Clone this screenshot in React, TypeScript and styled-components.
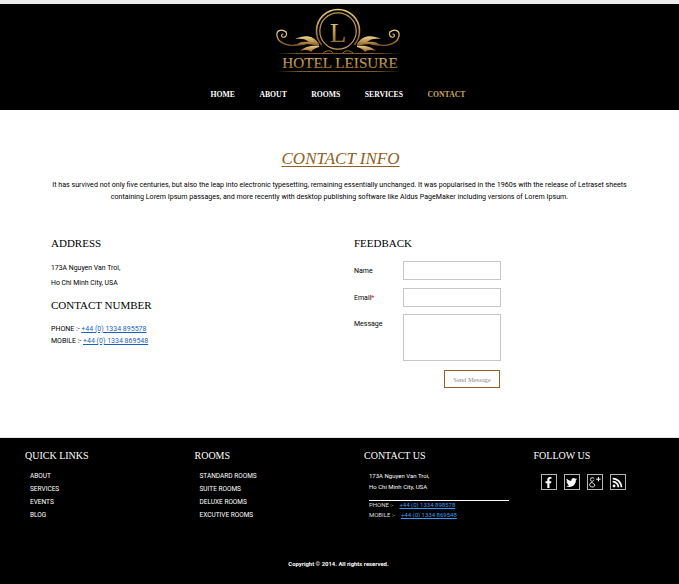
import React from "react";
import styled, { createGlobalStyle } from "styled-components";
import { FaFacebookF, FaTwitter, FaRss } from "react-icons/fa";

const GlobalStyle = createGlobalStyle`
  html, body {
    margin: 0;
    padding: 0;
    background: #fff;
  }
  body {
    font-family: Roboto, "Liberation Sans", sans-serif;
  }
  * {
    box-sizing: border-box;
  }
`;

const serif = `"Liberation Serif", "DejaVu Serif", serif`;
const gold = "#8f5f24";

const Page = styled.div`
  width: 679px;
  height: 584px;
  overflow: hidden;
  background: #fff;
`;

const Header = styled.header`
  height: 110px;
  background: #000;
  border-top: 4px solid #ececec;
  display: flex;
  flex-direction: column;
  align-items: center;
  padding-top: 4px;
`;

const LogoSvg = styled.svg`
  display: block;
  margin-right: 3px;
`;

const Nav = styled.nav`
  display: flex;
  gap: 24.5px;
  margin-top: 12px;
  padding-right: 3px;
`;

const NavLink = styled.a<{ $active?: boolean }>`
  font-family: ${serif};
  font-size: 7.7px;
  line-height: 14px;
  font-weight: 700;
  color: ${({ $active }) => ($active ? "#c9a968" : "#fff")};
`;

const Main = styled.main`
  height: 327px;
  padding-top: 38px;
`;

const Title = styled.h1`
  margin: 0;
  text-align: center;
  font-family: ${serif};
  font-size: 17px;
  line-height: 22px;
  font-weight: 400;
  font-style: italic;
  color: ${gold};
  text-decoration: underline;
  text-underline-offset: 2px;
  text-decoration-thickness: 1px;
  padding-left: 2px;
`;

const Intro = styled.p`
  margin: 9px 0 0;
  padding: 0 40px;
  text-align: center;
  font-size: 7.12px;
  line-height: 12px;
  color: #000;
`;

const Columns = styled.div`
  display: grid;
  grid-template-columns: 303px 160px;
  padding-left: 51px;
  margin-top: 32px;
`;

const SectionHead = styled.h3`
  margin: 0;
  font-family: ${serif};
  font-size: 11px;
  line-height: 16px;
  font-weight: 400;
  color: #000;
`;

const AddressLine = styled.p`
  margin: 0;
  font-size: 6.9px;
  line-height: 15px;
  color: #000;
`;

const AddressBlock = styled.div`
  margin: 10px 0 6px;
`;

const PhoneBlock = styled.div`
  margin-top: 10px;
`;

const PhoneLine = styled.p`
  margin: 0;
  font-size: 7px;
  line-height: 12px;
  color: #000;
`;

const PhoneLink = styled.a<{ $light?: boolean }>`
  color: ${({ $light }) => ($light ? "#3b9af0" : "#1a5fc0")};
  text-decoration: underline;
`;

const Form = styled.div`
  display: grid;
  grid-template-columns: 49px 98px;
  row-gap: 8px;
  margin-top: 10px;
`;

const Label = styled.label<{ $raised?: boolean }>`
  font-size: 7px;
  line-height: 18px;
  padding-top: 1px;
  margin-top: ${({ $raised }) => ($raised ? "-1px" : "0")};
  color: #000;
`;

const Required = styled.span`
  color: #e01030;
`;

const TextInput = styled.div<{ $tall?: boolean }>`
  height: ${({ $tall }) => ($tall ? "47px" : "19px")};
  margin-top: ${({ $tall }) => ($tall ? "-1px" : "0")};
  border: 1px solid #c6c6c6;
  background: #fff;
`;

const SendButton = styled.button`
  grid-column: 2;
  justify-self: end;
  width: 56px;
  height: 18px;
  margin-top: 1px;
  margin-right: 1px;
  padding: 0;
  background: #fff;
  border: 1px solid ${gold};
  font-family: ${serif};
  font-size: 6.5px;
  color: #8a8a8a;
`;

const Footer = styled.footer`
  height: 147px;
  background: #000;
  border-top: 1px solid #e6e6e6;
  padding: 11px 25px 0;
  color: #fff;
`;

const FooterGrid = styled.div`
  display: grid;
  grid-template-columns: repeat(4, 169.5px);
  height: 110px;
`;

const FooterHead = styled.h4`
  margin: 0;
  font-family: ${serif};
  font-size: 10px;
  line-height: 13px;
  font-weight: 400;
  color: #fff;
`;

const FooterList = styled.ul`
  list-style: none;
  margin: 8px 0 0;
  padding: 0 0 0 5px;
`;

const FooterItem = styled.li`
  font-size: 6.5px;
  line-height: 13px;
  color: #fff;
`;

const FooterAddress = styled.div`
  margin: 8px 0 0 5px;
  width: 140px;
  padding-bottom: 8px;
  border-bottom: 1px solid #fff;
`;

const FooterLine = styled.p`
  margin: 0;
  font-size: 6px;
  line-height: 11px;
  color: #fff;
`;

const FooterPhones = styled.div`
  margin: -1px 0 0 5px;
`;

const FooterPhone = styled.p`
  margin: 0;
  font-size: 6px;
  line-height: 10px;
  color: #ddd;
`;

const FooterPhoneLink = styled(PhoneLink)`
  margin-left: 3px;
`;

const Socials = styled.div`
  display: flex;
  gap: 7px;
  margin: 12px 0 0 7px;
`;

const Social = styled.a`
  width: 16px;
  height: 16px;
  border: 1px solid #b5b5b5;
  display: flex;
  align-items: center;
  justify-content: center;
  color: #fff;
  font-size: 11px;
`;

const Copyright = styled.p`
  margin: 0;
  text-align: center;
  font-size: 5.9px;
  line-height: 10px;
  font-weight: 700;
  color: #fff;
  padding-right: 2px;
`;

const Scroll = () => (
  <g>
    <path
      d="M13 24 C8 20 3 23 4 28 C5 33 10 36 15 37 C20 38 26 37 32 36"
      fill="none"
      stroke="url(#goldStroke)"
      strokeWidth="1.3"
      strokeLinecap="round"
    />
    <path
      d="M13 24 C15 27 12 30 9.5 29 C8 28 8.5 26 10 26"
      fill="none"
      stroke="#e0bf7c"
      strokeWidth="1.2"
      strokeLinecap="round"
    />
    <path
      d="M46 36 C41 28 33 26 22 31 C28 30 33 31 36 34 C30 33 26 34 23 37 C30 35 38 36 46 38 Z"
      fill="url(#goldStroke)"
    />
    <path
      d="M46 38 C40 37 32 38 27 43 C33 41 36 42 38 44 C40 41 43 40 46 39 Z"
      fill="url(#goldStroke)"
    />
  </g>
);

const Logo = () => (
  <LogoSvg width="130" height="68" viewBox="0 0 130 68">
    <defs>
      <linearGradient id="goldStroke" x1="0" y1="0" x2="0" y2="1">
        <stop offset="0" stopColor="#ecd08e" />
        <stop offset="0.55" stopColor="#bd924d" />
        <stop offset="1" stopColor="#7a5524" />
      </linearGradient>
      <linearGradient id="goldRule" x1="0" y1="0" x2="1" y2="0">
        <stop offset="0" stopColor="#000" />
        <stop offset="0.2" stopColor="#7c5a2b" />
        <stop offset="0.8" stopColor="#7c5a2b" />
        <stop offset="1" stopColor="#000" />
      </linearGradient>
    </defs>
    <path
      d="M48.7 37 A21.5 21.5 0 1 1 81.3 37"
      fill="none"
      stroke="url(#goldStroke)"
      strokeWidth="1.6"
    />
    <circle cx="65" cy="23" r="18.2" fill="none" stroke="#c29a55" strokeWidth="1.2" />
    <text
      x="65"
      y="33.5"
      textAnchor="middle"
      fontFamily={serif}
      fontSize="27"
      fill="url(#goldStroke)"
    >
      L
    </text>
    <Scroll />
    <g transform="matrix(-1 0 0 1 130 0)">
      <Scroll />
    </g>
    <rect x="3" y="45" width="124" height="1" fill="url(#goldRule)" />
    <path d="M50 45 C54 42 58 42 60 45 M70 45 C72 42 76 42 80 45" stroke="#9a7236" fill="none" />
    <text
      x="67"
      y="60"
      textAnchor="middle"
      fontFamily={serif}
      fontSize="15.2"
      fill="url(#goldStroke)"
      stroke="#b3935f"
      strokeWidth="0.15"
    >
      HOTEL LEISURE
    </text>
    <rect x="3" y="63" width="124" height="1" fill="url(#goldRule)" />
  </LogoSvg>
);

const GooglePlus = () => (
  <svg width="14" height="13" viewBox="0 0 14 13" fill="none" stroke="#fff" strokeWidth="0.9">
    <path d="M6.2 2.6 C5.4 1.4 2.6 1.2 2.4 3.4 C2.2 5.6 5.6 6 5.8 3.8 M4 6.4 C1.6 7 1 9 2.4 10.4 C4 11.6 7 11 6.8 9 C6.6 7.6 4 7.4 4 6.2" />
    <path d="M10.4 1 V5.4 M8.2 3.2 H12.6" strokeWidth="1" />
  </svg>
);

const quickLinks = ["ABOUT", "SERVICES", "EVENTS", "BLOG"];
const rooms = ["STANDARD ROOMS", "SUITE ROOMS", "DELUXE ROOMS", "EXCUTIVE ROOMS"];
const navItems = ["HOME", "ABOUT", "ROOMS", "SERVICES", "CONTACT"];

export default function App() {
  return (
    <Page>
      <GlobalStyle />
      <Header>
        <Logo />
        <Nav>
          {navItems.map((item) => (
            <NavLink key={item} $active={item === "CONTACT"}>
              {item}
            </NavLink>
          ))}
        </Nav>
      </Header>
      <Main>
        <Title>CONTACT INFO</Title>
        <Intro>
          It has survived not only five centuries, but also the leap into electronic typesetting,
          remaining essentially unchanged. It was popularised in the 1960s with the release of
          Letraset sheets containing Lorem Ipsum passages, and more recently with desktop publishing
          software like Aldus PageMaker including versions of Lorem Ipsum.
        </Intro>
        <Columns>
          <div>
            <SectionHead>ADDRESS</SectionHead>
            <AddressBlock>
              <AddressLine>173A Nguyen Van Troi,</AddressLine>
              <AddressLine>Ho Chi Minh City, USA</AddressLine>
            </AddressBlock>
            <SectionHead>CONTACT NUMBER</SectionHead>
            <PhoneBlock>
              <PhoneLine>
                PHONE :- <PhoneLink>+44 (0) 1334 895578</PhoneLink>
              </PhoneLine>
              <PhoneLine>
                MOBILE :- <PhoneLink>+44 (0) 1334 869548</PhoneLink>
              </PhoneLine>
            </PhoneBlock>
          </div>
          <div>
            <SectionHead>FEEDBACK</SectionHead>
            <Form>
              <Label>Name</Label>
              <TextInput />
              <Label>
                Email<Required>*</Required>
              </Label>
              <TextInput />
              <Label $raised>Message</Label>
              <TextInput $tall />
              <SendButton>Send Message</SendButton>
            </Form>
          </div>
        </Columns>
      </Main>
      <Footer>
        <FooterGrid>
          <div>
            <FooterHead>QUICK LINKS</FooterHead>
            <FooterList>
              {quickLinks.map((link) => (
                <FooterItem key={link}>{link}</FooterItem>
              ))}
            </FooterList>
          </div>
          <div>
            <FooterHead>ROOMS</FooterHead>
            <FooterList>
              {rooms.map((room) => (
                <FooterItem key={room}>{room}</FooterItem>
              ))}
            </FooterList>
          </div>
          <div>
            <FooterHead>CONTACT US</FooterHead>
            <FooterAddress>
              <FooterLine>173A Nguyen Van Troi,</FooterLine>
              <FooterLine>Ho Chi Minh City, USA</FooterLine>
            </FooterAddress>
            <FooterPhones>
              <FooterPhone>
                PHONE :- &nbsp;<FooterPhoneLink $light>+44 (0) 1334 898578</FooterPhoneLink>
              </FooterPhone>
              <FooterPhone>
                MOBILE :- &nbsp;<FooterPhoneLink $light>+44 (0) 1334 869548</FooterPhoneLink>
              </FooterPhone>
            </FooterPhones>
          </div>
          <div>
            <FooterHead>FOLLOW US</FooterHead>
            <Socials>
              <Social>
                <FaFacebookF />
              </Social>
              <Social>
                <FaTwitter />
              </Social>
              <Social>
                <GooglePlus />
              </Social>
              <Social>
                <FaRss />
              </Social>
            </Socials>
          </div>
        </FooterGrid>
        <Copyright>Copyright © 2014. All rights reserved.</Copyright>
      </Footer>
    </Page>
  );
}
